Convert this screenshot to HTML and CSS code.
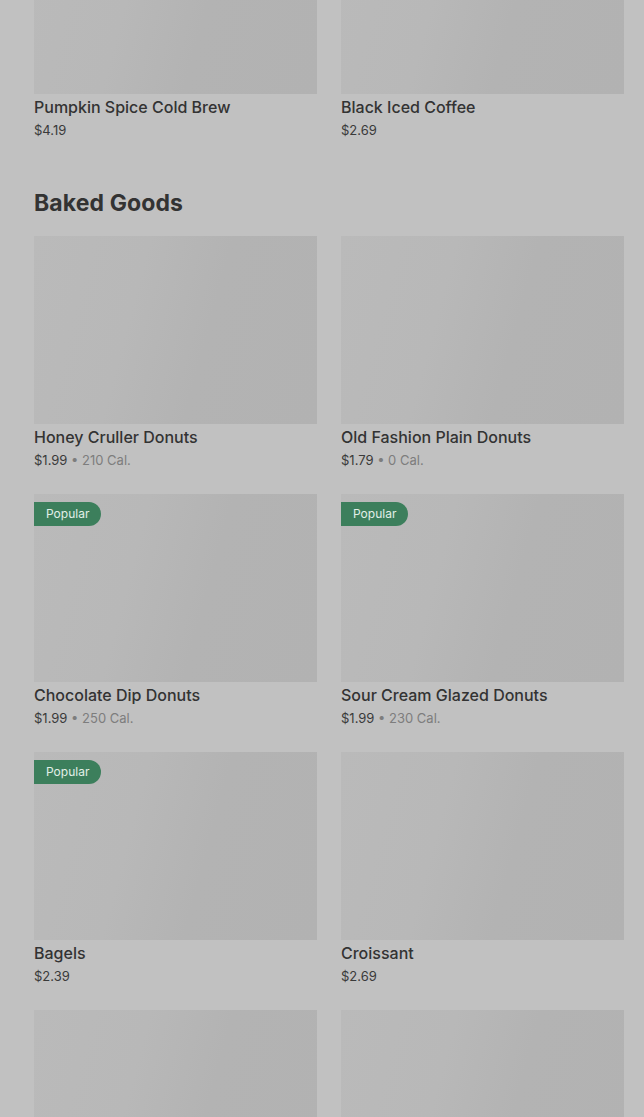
FILE: index.html
```html
<!DOCTYPE html>
<html lang="en">
<head>
    <meta charset="UTF-8">
    <meta name="viewport" content="width=device-width, initial-scale=1.0">
    <title>Menu</title>
    <link rel="stylesheet" href="styles.css">
</head>
<body>
    <div class="menu">
        <section class="section first">
            <div class="grid">
                <div class="item">
                    <div class="thumb"></div>
                    <div class="name">Pumpkin Spice Cold Brew</div>
                    <div class="meta">$4.19</div>
                </div>
                <div class="item">
                    <div class="thumb"></div>
                    <div class="name">Black Iced Coffee</div>
                    <div class="meta">$2.69</div>
                </div>
            </div>
        </section>

        <section class="section">
            <h2>Baked Goods</h2>
            <div class="grid">
                <div class="item">
                    <div class="thumb"></div>
                    <div class="name">Honey Cruller Donuts</div>
                    <div class="meta">$1.99 <span class="cal">&bull; 210 Cal.</span></div>
                </div>
                <div class="item">
                    <div class="thumb"></div>
                    <div class="name">Old Fashion Plain Donuts</div>
                    <div class="meta">$1.79 <span class="cal">&bull; 0 Cal.</span></div>
                </div>
                <div class="item">
                    <div class="thumb"><span class="badge">Popular</span></div>
                    <div class="name">Chocolate Dip Donuts</div>
                    <div class="meta">$1.99 <span class="cal">&bull; 250 Cal.</span></div>
                </div>
                <div class="item">
                    <div class="thumb"><span class="badge">Popular</span></div>
                    <div class="name">Sour Cream Glazed Donuts</div>
                    <div class="meta">$1.99 <span class="cal">&bull; 230 Cal.</span></div>
                </div>
                <div class="item">
                    <div class="thumb"><span class="badge">Popular</span></div>
                    <div class="name">Bagels</div>
                    <div class="meta">$2.39</div>
                </div>
                <div class="item">
                    <div class="thumb"></div>
                    <div class="name">Croissant</div>
                    <div class="meta">$2.69</div>
                </div>
                <div class="item">
                    <div class="thumb"></div>
                    <div class="name">&nbsp;</div>
                    <div class="meta">&nbsp;</div>
                </div>
                <div class="item">
                    <div class="thumb"></div>
                    <div class="name">&nbsp;</div>
                    <div class="meta">&nbsp;</div>
                </div>
            </div>
        </section>
    </div>
</body>
</html>
```

FILE: styles.css
```css
body {
    margin: 0;
    padding: 0;
    background-color: #c1c1c1;
    font-family: Inter, "Noto Sans", sans-serif;
    color: #333;
    overflow: hidden;
}
.menu {
    padding: 0 20px 0 34px;
    margin-top: -94px;
}
.section h2 {
    margin: 49px 0 19px;
    font-size: 23px;
    line-height: 28px;
    font-weight: 700;
    letter-spacing: 0.1px;
    color: #333;
}
.grid {
    display: grid;
    grid-template-columns: 283px 283px;
    column-gap: 24px;
    row-gap: 24px;
}
.thumb {
    position: relative;
    height: 188px;
    background-image: linear-gradient(105deg, #bababa 0%, #b8b8b8 35%, #b3b3b3 60%, #b2b2b2 100%);
}
.badge {
    position: absolute;
    top: 8px;
    left: 0;
    height: 24px;
    line-height: 24px;
    padding: 0 12px;
    background-color: #3c7f5c;
    color: #e2efe7;
    font-size: 12px;
    border-radius: 0 12px 12px 0;
}
.name {
    margin-top: 3px;
    font-size: 16px;
    line-height: 20px;
    font-weight: 500;
    color: #333;
}
.meta {
    margin-top: 3px;
    font-size: 13px;
    line-height: 20px;
    color: #3a3a3a;
}
.meta .cal {
    color: #7d7d7d;
}
```
